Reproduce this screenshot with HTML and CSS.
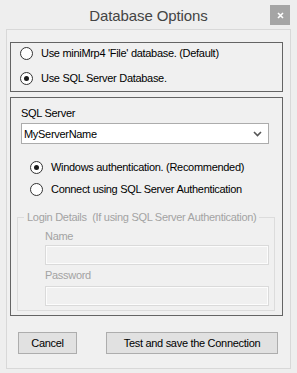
FILE: index.html
```html
<!DOCTYPE html>
<html lang="en">

<head>
  <meta charset="UTF-8" />
  <meta name="viewport" content="width=device-width, initial-scale=1.0" />
  <title>Database Options</title>
  <link rel="stylesheet" href="styles.css">
</head>

<body>
  <div class="window">

    <!-- barra de titulo -->
    <div class="title-bar">
      <span class="title">Database Options</span>
      <span class="close-btn">
        <svg width="7" height="7" viewBox="0 0 7 7">
          <path d="M1 1 L6 6 M6 1 L1 6" stroke="#fff" stroke-width="1.6" />
        </svg>
      </span>
    </div>

    <div class="client">

      <div class="group group-type">
        <div class="radio-row">
          <span class="radio"></span>
          <span>Use miniMrp4 'File' database. (Default)</span>
        </div>
        <div class="radio-row">
          <span class="radio checked"></span>
          <span>Use SQL Server Database.</span>
        </div>
      </div>

      <div class="group group-sql">
        <div class="label">SQL Server</div>
        <div class="combo">
          <span>MyServerName</span>
          <svg class="chevron" width="9" height="6" viewBox="0 0 9 6">
            <path d="M1 1 L4.5 4.5 L8 1" stroke="#555" stroke-width="1.6" fill="none" />
          </svg>
        </div>

        <div class="radio-row auth first">
          <span class="radio checked"></span>
          <span>Windows authentication. (Recommended)</span>
        </div>
        <div class="radio-row auth">
          <span class="radio"></span>
          <span>Connect using SQL Server Authentication</span>
        </div>

        <fieldset class="login">
          <legend>Login Details&nbsp; (If using SQL Server Authentication)</legend>
          <div class="login-body">
            <div class="label disabled name-label">Name</div>
            <div class="input"></div>
            <div class="label disabled pass-label">Password</div>
            <div class="input"></div>
          </div>
        </fieldset>
      </div>

      <div class="button-group">
        <button class="btn btn-cancel">Cancel</button>
        <button class="btn btn-save">Test and save the Connection</button>
      </div>

    </div>
  </div>
</body>

</html>
```

FILE: styles.css
```css
/* janela base */
body {
  margin: 0;
  background: #efefef;
  font-family: "Liberation Sans", Arial, sans-serif;
  font-size: 11px;
  letter-spacing: -0.3px;
  color: #000;
}

.window {
  width: 297px;
  height: 373px;
  background: #eeeeee;
  display: flex;
  flex-direction: column;
}

/* Barra de titulo */
.title-bar {
  height: 29px;
  display: flex;
  align-items: center;
  justify-content: center;
  position: relative;
}

.title {
  font-size: 15px;
  letter-spacing: -0.1px;
  color: #444;
  margin-top: 1px;
}

.close-btn {
  position: absolute;
  top: 5px;
  left: 270px;
  width: 20px;
  height: 20px;
  background: #a5a5a5;
  display: flex;
  align-items: center;
  justify-content: center;
}

/* area do cliente */
.client {
  margin: 0 6px;
  height: 338px;
  border: 1px solid #d8d8d8;
  background: #f0f0f0;
  display: flex;
  flex-direction: column;
}

.group {
  border: 1px solid #646464;
  margin-left: 3px;
  width: 271px;
}

.group-type {
  margin-top: 12px;
  height: 48px;
}

.group-sql {
  margin-top: 5px;
  height: 217px;
}

.radio-row {
  height: 20px;
  display: flex;
  align-items: center;
  gap: 8px;
  padding-left: 9px;
  white-space: nowrap;
}

.radio-row + .radio-row {
  margin-top: 5px;
}

.radio {
  width: 11px;
  height: 11px;
  border: 1px solid #333;
  border-radius: 50%;
  background: #fff;
  display: flex;
  align-items: center;
  justify-content: center;
}

.radio.checked::after {
  content: "";
  width: 5px;
  height: 5px;
  border-radius: 50%;
  background: #1a1a1a;
}

.label {
  line-height: 14px;
  padding-left: 10px;
}

.group-sql > .label {
  margin-top: 8px;
}

.combo {
  margin: 3px 0 0 10px;
  height: 19px;
  border: 1px solid #acacac;
  background: #fff;
  display: flex;
  align-items: center;
  justify-content: space-between;
  padding: 0 6px 0 2px;
  width: 238px;
}

.auth {
  padding-left: 19px;
}

.auth.first {
  margin-top: 13px;
}

.radio-row.auth + .radio-row.auth {
  margin-top: 2px;
}

/* Login Details desabilitado */
.login {
  margin: 11px 7px 0 6px;
  padding: 0 0 4px 6px;
  border: 1px solid #dcdcdc;
  min-width: 0;
}

.login legend {
  padding: 0 3px;
  line-height: 14px;
  color: #a3a3a3;
  white-space: nowrap;
}

.login-body {
  padding-left: 21px;
  padding-right: 5px;
}

.label.disabled {
  color: #a3a3a3;
  padding-left: 0;
}

.name-label {
  margin-top: 5px;
  line-height: 15px;
  margin-bottom: 1px;
}

.pass-label {
  margin-top: 3px;
  line-height: 15px;
  margin-bottom: 3px;
}

.input {
  height: 18px;
  border: 1px solid #dadada;
  box-shadow: inset 0 0 0 1px #fcfcfc;
  background: #f0f0f0;
}

/* botoes */
.button-group {
  margin-top: 16px;
  padding-left: 11px;
  display: flex;
  gap: 29px;
}

.btn {
  height: 22px;
  border: 1px solid #adadad;
  background: #e1e1e1;
  font-family: "Liberation Sans", Arial, sans-serif;
  font-size: 11px;
  letter-spacing: -0.3px;
  color: #000;
  padding: 0;
}

.btn-cancel {
  width: 59px;
}

.btn-save {
  width: 172px;
}
```
